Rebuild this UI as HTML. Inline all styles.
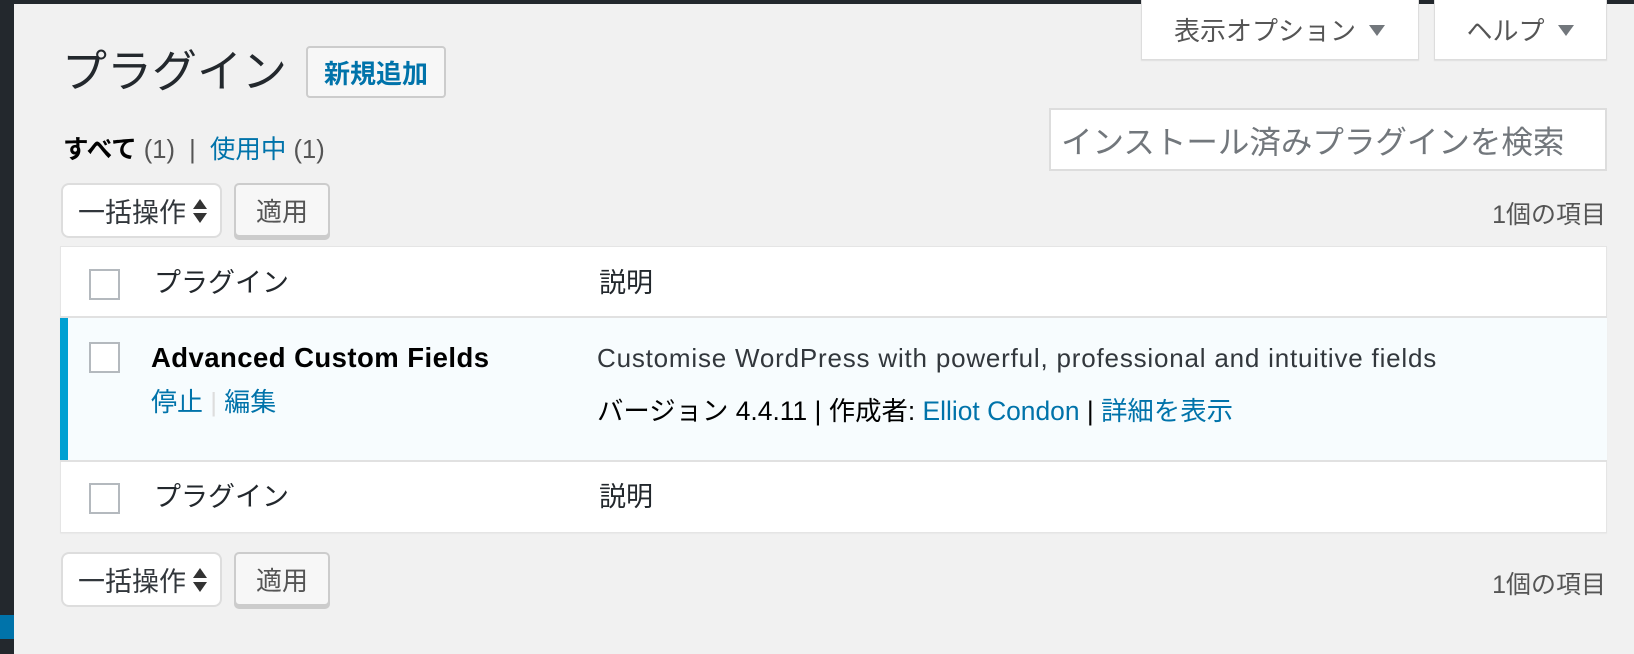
<!DOCTYPE html>
<html><head><meta charset="utf-8"><style>
*{box-sizing:border-box;margin:0;padding:0}
body{width:1634px;height:654px;background:#f1f1f1;position:relative;overflow:hidden;font-family:"Liberation Sans","Noto Sans CJK JP",sans-serif;color:#23282d}
.a{position:absolute;white-space:nowrap}
.btn{position:absolute;background:#f7f7f7;border:2px solid #ccc;border-radius:5px;box-shadow:0 3px 0 #ccc;color:#555;font-size:26px;display:flex;align-items:center;justify-content:center}
.sel{position:absolute;background:#fff;border:2px solid #ddd;border-radius:8px;font-size:27px;color:#32373c;display:flex;align-items:center;padding-left:15px}
.cb{position:absolute;width:31px;height:31px;border:2px solid #b4b9be;background:#fff}
.lk{color:#0073aa}
.arr{display:inline-block;margin-left:12px;line-height:0;vertical-align:middle}
</style></head><body>
<div class="a" style="left:0;top:0;width:1634px;height:4px;background:#23282d"></div>
<div class="a" style="left:0;top:0;width:14px;height:654px;background:#23282d"></div>
<div class="a" style="left:0;top:615px;width:14px;height:24px;background:#0073aa"></div>

<div class="a" style="left:62px;top:42px;font-size:45px;line-height:60px;color:#23282d">プラグイン</div>
<div class="a" style="left:306px;top:46px;width:140px;height:52px;background:#f7f7f7;border:2px solid #ccc;border-radius:4px;color:#0073aa;font-weight:bold;font-size:26px;display:flex;align-items:center;justify-content:center">新規追加</div>

<div class="a" style="left:1141px;top:0;width:278px;height:60px;background:#fff;border:1px solid #ddd;border-top:0;box-shadow:0 1px 1px rgba(0,0,0,.08);font-size:26px;color:#555;display:flex;align-items:center;justify-content:center">表示オプション<svg class="arr" width="18" height="14"><path d="M1 2h16l-8 11z" fill="#72777c"/></svg></div>
<div class="a" style="left:1434px;top:0;width:173px;height:60px;background:#fff;border:1px solid #ddd;border-top:0;box-shadow:0 1px 1px rgba(0,0,0,.08);font-size:26px;color:#555;display:flex;align-items:center;justify-content:center">ヘルプ<svg class="arr" width="18" height="14"><path d="M1 2h16l-8 11z" fill="#72777c"/></svg></div>

<div class="a" style="left:63px;top:134px;font-size:25.5px;line-height:32px;color:#555"><b style="color:#000">すべて</b> (1) &nbsp;| &nbsp;<span class="lk">使用中</span> (1)</div>

<div class="a" style="left:1049px;top:108px;width:558px;height:63px;background:#fff;border:2px solid #ddd;font-size:31.5px;color:#72777c;padding-left:10px;display:flex;align-items:center">インストール済みプラグインを検索</div>

<div class="sel" style="left:61px;top:183px;width:161px;height:55px">一括操作<svg style="margin-left:6px" width="16" height="28"><path d="M1 12L8 2l7 10z M1 16h14l-7 10z" fill="#333"/></svg></div>
<div class="btn" style="left:234px;top:183px;width:96px;height:54px">適用</div>
<div class="a" style="right:28px;top:195px;font-size:25px;color:#555">1個の項目</div>

<div class="a" style="left:60px;top:246px;width:1547px;height:287px;background:#fff;border:1px solid #e5e5e5;box-shadow:0 1px 1px rgba(0,0,0,.04)"></div>
<div class="a" style="left:60px;top:316px;width:1547px;height:2px;background:#e1e1e1"></div>
<div class="a" style="left:60px;top:318px;width:1547px;height:142px;background:#f7fcfe;border-left:8px solid #00a0d2"></div>
<div class="a" style="left:60px;top:460px;width:1547px;height:2px;background:#e1e1e1"></div>

<div class="cb" style="left:89px;top:269px"></div>
<div class="a" style="left:154px;top:265px;font-size:27px;line-height:36px">プラグイン</div>
<div class="a" style="left:599px;top:265px;font-size:27px;line-height:36px">説明</div>

<div class="cb" style="left:89px;top:342px"></div>
<div class="a" style="left:151px;top:340px;font-size:27.5px;font-weight:bold;line-height:36px;color:#000;letter-spacing:0.45px">Advanced Custom Fields</div>
<div class="a" style="left:151px;top:384px;font-size:26px;line-height:36px"><span class="lk">停止</span> <span style="color:#ddd">|</span> <span class="lk">編集</span></div>
<div class="a" style="left:597px;top:340px;font-size:26px;line-height:36px;color:#32373c;letter-spacing:0.8px">Customise WordPress with powerful, professional and intuitive fields</div>
<div class="a" style="left:597px;top:393px;font-size:26.4px;line-height:36px;color:#000">バージョン 4.4.11 | 作成者: <span class="lk">Elliot Condon</span> | <span class="lk">詳細を表示</span></div>

<div class="cb" style="left:89px;top:483px"></div>
<div class="a" style="left:154px;top:479px;font-size:27px;line-height:36px">プラグイン</div>
<div class="a" style="left:599px;top:479px;font-size:27px;line-height:36px">説明</div>

<div class="sel" style="left:61px;top:552px;width:161px;height:55px">一括操作<svg style="margin-left:6px" width="16" height="28"><path d="M1 12L8 2l7 10z M1 16h14l-7 10z" fill="#333"/></svg></div>
<div class="btn" style="left:234px;top:552px;width:96px;height:54px">適用</div>
<div class="a" style="right:28px;top:565px;font-size:25px;color:#555">1個の項目</div>
</body></html>
